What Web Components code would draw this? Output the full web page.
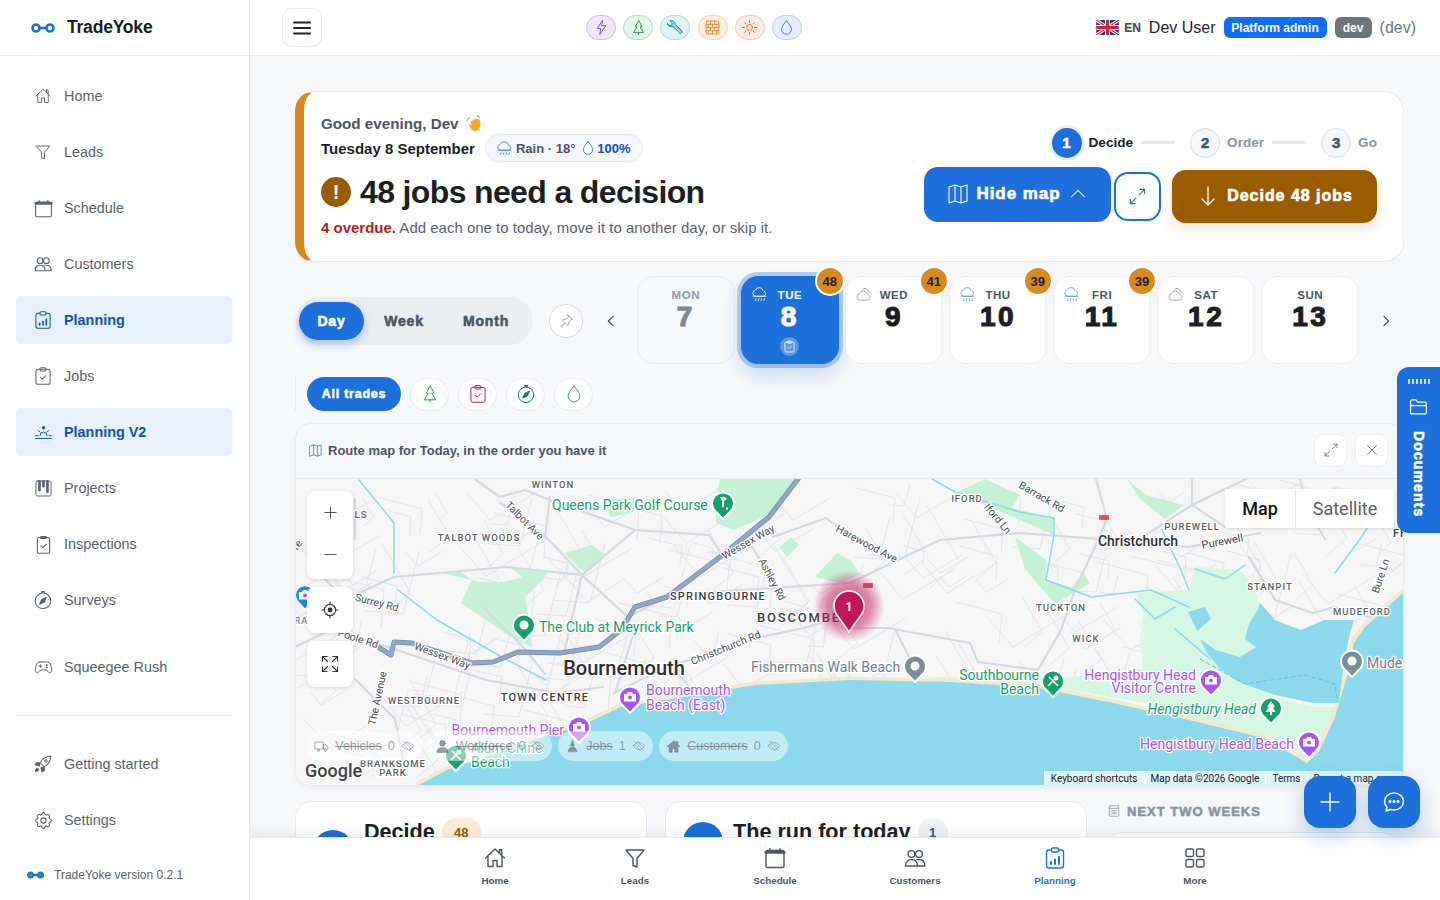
<!DOCTYPE html>
<html lang="en">
<head>
<meta charset="utf-8">
<title>TradeYoke</title>
<style>
  html, body { margin: 0; height: 100%; overflow: hidden; background: #f6f7f9; }
  body { font-family: "Liberation Sans", Arial, sans-serif; color: #1a1f26; --fat-sp: .06em; --fat-st: .04em; }
</style>
</head>
<body>
<ty-app></ty-app>

<script>
// icon paths, all on a 24 box
const ICONS = {
  menu: '<path d="M4 6.5h16M4 12h16M4 17.5h16"/>',
  home: '<path d="M2.5 12 12 3l9.5 9M5 10v10.5h5V14.5h4v6h5V10M16.5 6.8V3.8h2.2v5.2"/>',
  funnel: '<path d="M3 4h18l-7 8.5V21l-4-1.5v-7z"/>',
  calendar: '<rect x="3" y="4.5" width="18" height="17" rx="1.6"/><path d="M3 6.2h18" stroke-width="3"/><path d="M7 2.6v2.4M17 2.6v2.4"/>',
  people: '<circle cx="8.5" cy="8" r="3.4"/><circle cx="16" cy="8" r="3.4"/><path d="M2.5 20c0-4 2.5-6.5 6-6.5s6 2.500 6 6.500zM14 13.700c.6-.2 1.300-.2 2-.2 3.500 0 5.800 2.500 5.800 6.500h-7.300"/>',
  clipdata: '<rect x="3.500" y="4" width="17" height="18" rx="2.500"/><rect x="8.500" y="2" width="7" height="4" rx="1.200" fill="#fff"/><path d="M8 18v-2M12 18v-4.500M16 18v-7" stroke-width="2"/>',
  clipcheck: '<rect x="3.500" y="4" width="17" height="18" rx="2.500"/><rect x="8.500" y="2" width="7" height="4" rx="1.200" fill="none"/><path d="m9 13.500 2.200 2.200 4-4"/>',
  sunrise: '<path d="M7.500 16a4.500 4.500 0 0 1 9 0M5.500 9.500l2 2M18.500 9.500l-2 2M2 16h3M19 16h3M2 19.500h20" /><circle cx="12" cy="6" r="1.600" fill="currentColor"/>',
  kanban: '<rect x="2.500" y="2.500" width="19" height="19" rx="2"/><path d="M7 3v11M12 3v6M17 3v13" stroke-width="3.400"/>',
  inspect: '<rect x="5" y="4" width="14" height="18" rx="1.500"/><path d="M9 2.800h6V5H9z" fill="currentColor"/><path d="m9 13.500 2.200 2.200 4-4"/>',
  compass: '<circle cx="12" cy="13" r="9.300"/><path d="M10.500 2.300h3" stroke-width="2"/><path d="m16 9-2.500 5.500L8 17l2.500-5.500z" fill="currentColor"/>',
  controller: '<path d="M7.500 5h9c2.500 0 4 1.500 4.700 4l1.200 6c.5 2.800-2.500 4.500-4.500 2.500L15.500 15h-7l-2.400 2.500C4.100 19.500 1.100 17.800 1.600 15l1.200-6C3.500 6.500 5 5 7.500 5z"/><path d="M8 8.500v3.500M6.200 10.200h3.600"/><circle cx="16" cy="9" r=".6" fill="currentColor"/><circle cx="16" cy="12" r=".6" fill="currentColor"/>',
  rocket: '<path d="M21.500 2.500c-6 .2-10 3-13 8l5 5c5-3 7.800-7 8-13z" /><circle cx="15.500" cy="8.500" r="1.500" fill="#fff"/><path d="M8.500 10.500H4L2.500 13l5 1.500zM13.500 15.500V20L11 21.500l-1.500-5z" fill="currentColor"/><path d="M5 17c-1.500 1-2 2.500-2 4 1.500 0 3-.5 4-2z" fill="currentColor"/>',
  gear: '<path d="M10.325 4.317c.426-1.756 2.924-1.756 3.350 0a1.724 1.724 0 0 0 2.573 1.066c1.543-.94 3.310.826 2.370 2.370a1.724 1.724 0 0 0 1.065 2.572c1.756.426 1.756 2.924 0 3.350a1.724 1.724 0 0 0-1.066 2.573c.94 1.543-.826 3.310-2.370 2.370a1.724 1.724 0 0 0-2.572 1.065c-.426 1.756-2.924 1.756-3.350 0a1.724 1.724 0 0 0-2.573-1.066c-1.543.94-3.310-.826-2.370-2.370a1.724 1.724 0 0 0-1.065-2.572c-1.756-.426-1.756-2.924 0-3.350a1.724 1.724 0 0 0 1.066-2.573c-.94-1.543.826-3.310 2.370-2.370 1 .608 2.296.07 2.572-1.065z"/><circle cx="12" cy="12" r="3"/>',
  bolt: '<path d="M13.500 2 6 13.500h5L9.500 22 18 9.500h-5.500z"/>',
  tree: '<path d="M12 2.500 7.500 11h2.300L5 19h14l-4.800-8h2.300zM12 19v3"/>',
  wrench: '<path d="M8.500 10.500 18 20a2.200 2.200 0 0 0 3-3l-9.500-9.500a5.500 5.500 0 0 0-7.500-5l3.500 3.500-.8 2.700-2.700.8L.5 6a5.500 5.500 0 0 0 8 4.500z" fill="currentColor" fill-opacity=".25"/>',
  bricks: '<rect x="3" y="3" width="18" height="18" rx="1"/><path d="M3 7.500h18M3 12h18M3 16.500h18M9 3v4.500M15 3v4.500M6 7.500V12M12 7.500V12M18 7.500V12M9 12v4.500M15 12v4.500M6 16.500V21M12 16.500V21M18 16.500V21"/>',
  sun: '<circle cx="12" cy="12" r="4.200"/><path d="M12 2v3M12 19v3M2 12h3M19 12h3M5 5l2 2M17 17l2 2M19 5l-2 2M7 17l-2 2"/>',
  drop: '<path d="M12 2.500c3.500 4.500 7 8 7 12a7 7 0 0 1-14 0c0-4 3.500-7.500 7-12z"/>',
  rain: '<path d="M6.500 14.500a4.200 4.200 0 0 1-.6-8.300 6 6 0 0 1 11.500.6 3.900 3.900 0 0 1-.2 7.700z"/><path d="M3 14.500h18M7 18l-.8 2.500M11 18l-.8 2.500M15 18l-.8 2.500M19 18l-.8 2.500"/>',
  cloud: '<path d="M7 20a4.500 4.500 0 0 1-.6-8.900 6 6 0 0 1 11.500.6 4.200 4.200 0 0 1-.2 8.300z"/><path d="M10 5.500a5 5 0 0 1 9 2.500 3.500 3.500 0 0 1 2.500 3"/>',
  map: '<path d="M3 5 9 3l6 2 6-2v16l-6 2-6-2-6 2zM9 3v16M15 5v16"/>',
  chevup: '<path d="m5 15 7-7 7 7"/>',
  chevleft: '<path d="m15 5-7 7 7 7"/>',
  chevright: '<path d="m9 5 7 7-7 7"/>',
  expand: '<path d="M14 10 21 3M15.500 3H21v5.500M10 14l-7 7M3 15.500V21h5.500"/>',
  down: '<path d="M12 3v18M6 15l6 6 6-6"/>',
  close: '<path d="M4 4l16 16M20 4 4 20"/>',
  pin: '<path d="m14.500 2.500 7 7-2 .5-3.500 3.500.5 4-1.500 1.500-3.800-3.800L5 21l-.5-.5 5.800-6.200L6.500 10.500 8 9l4 .5L15.500 6z"/>',
  plus: '<path d="M12 3v18M3 12h18"/>',
  minus: '<path d="M3 12h18"/>',
  locate: '<circle cx="12" cy="12" r="7.500"/><circle cx="12" cy="12" r="2.500" fill="currentColor"/><path d="M12 1.500v3M12 19.500v3M1.500 12h3M19.500 12h3"/>',
  fullscreen: '<path d="M3 8.500V3h5.500M3 3l6 6M21 8.500V3h-5.500M21 3l-6 6M3 15.500V21h5.500M3 21l6-6M21 15.500V21h-5.500M21 21l-6-6"/>',
  chat: '<path d="M12 3c5.500 0 9.500 3.800 9.500 8.500S17.500 20 12 20c-1.300 0-2.500-.2-3.600-.6L4 21l1-4C3.500 15.500 2.500 13.500 2.500 11.500 2.500 6.800 6.500 3 12 3z"/><circle cx="8" cy="11.500" r=".8" fill="currentColor"/><circle cx="12" cy="11.500" r=".8" fill="currentColor"/><circle cx="16" cy="11.500" r=".8" fill="currentColor"/>',
  grid: '<rect x="3" y="3" width="7.500" height="7.500" rx="1.500"/><rect x="13.500" y="3" width="7.500" height="7.500" rx="1.500"/><rect x="3" y="13.500" width="7.500" height="7.500" rx="1.500"/><rect x="13.500" y="13.500" width="7.500" height="7.500" rx="1.500"/>',
  folder: '<path d="M3 19V6a1.500 1.500 0 0 1 1.500-1.500H9l2 2.500h8.500A1.500 1.500 0 0 1 21 8.500V19a1.500 1.500 0 0 1-1.500 1.500h-15A1.500 1.500 0 0 1 3 19zM3 11h18"/>',
  note: '<rect x="4" y="3" width="16" height="18" rx="1.500"/><path d="M4 7.500h16M8 11h8M8 14h8M8 17h8"/>',
  truck: '<path d="M2 5h13v11H2zM15 9h4l3 3.500V16h-7z"/><circle cx="7" cy="18" r="2"/><circle cx="18" cy="18" r="2"/>',
  eyeoff: '<path d="M2 12s3.500-6 10-6 10 6 10 6-3.500 6-10 6-10-6-10-6zM4 4l16 16M8 3.500l12 12M3.500 9 15 20.500"/>',
  person: '<circle cx="12" cy="7" r="4.500" fill="currentColor"/><path d="M3 21c0-5 4-7 9-7s9 2 9 7z" fill="currentColor"/>',
  worker: '<path d="M12 2l3 9H9zM5 20c0-4 3-7 7-7s7 3 7 7z" fill="currentColor"/>',
  house: '<path d="M12 3 2 12h3v9h5v-6h4v6h5v-9h3l-3-2.800V4h-3v2.400z" fill="currentColor"/>'
};

class TyIcon extends HTMLElement {
  connectedCallback() {
    const size = this.getAttribute('size') || 24;
    const sw = this.getAttribute('sw') || 1.5;
    this.attachShadow({ mode: 'open' }).innerHTML = `
      <style>:host { display: inline-flex; flex: none; line-height: 0; -webkit-text-stroke: 0; } svg { display: block; }</style>
      <svg width="${size}" height="${size}" viewBox="0 0 24 24" fill="none" stroke="currentColor" stroke-width="${sw}" stroke-linecap="round" stroke-linejoin="round">${ICONS[this.getAttribute('name')] || ''}</svg>`;
  }
}
customElements.define('ty-icon', TyIcon);

// the yoke logo, two rings on a bar
class TyLogo extends HTMLElement {
  connectedCallback() {
    const small = this.hasAttribute('small');
    this.attachShadow({ mode: 'open' }).innerHTML = `
      <style>:host { display: inline-flex; flex: none; line-height: 0; }</style>
      ${small
        ? '<svg width="17" height="8" viewBox="0 0 17 8"><rect x="1" y="2.700" width="15" height="2.600" fill="#1d6fdc"/><circle cx="3.500" cy="4" r="2.800" fill="#1fa34a" stroke="#1d6fdc" stroke-width="1.400"/><circle cx="13.500" cy="4" r="2.800" fill="#1fa34a" stroke="#1d6fdc" stroke-width="1.400"/></svg>'
        : '<svg width="24" height="10" viewBox="0 0 24 10"><rect x="6" y="3.700" width="12" height="2.600" fill="#1d6fdc"/><circle cx="5" cy="5" r="3.500" fill="#fff" stroke="#1d6fdc" stroke-width="2.600"/><circle cx="19" cy="5" r="3.500" fill="#fff" stroke="#1d6fdc" stroke-width="2.600"/></svg>'}`;
  }
}
customElements.define('ty-logo', TyLogo);

class TyNavItem extends HTMLElement {
  connectedCallback() {
    const icon = this.getAttribute('icon'), size = +this.getAttribute('size') || 19;
    this.attachShadow({ mode: 'open' }).innerHTML = `
      <style>
        :host { display: flex; align-items: center; height: 48px; border-radius: 6px; font-size: 14.400px; color: #59616d; margin-bottom: 8px; }
        :host([active]) { background: #e8f0fb; color: #0f52ad; font-weight: 700; }
        :host([gapped]) { margin-top: 19px; }
        .ic { width: 52px; padding-left: 6px; box-sizing: border-box; height: 24px; display: flex; align-items: center; justify-content: center; flex: none; margin-left: -2px; margin-right: -2px; }
      </style>
      <span class="ic"><ty-icon name="${icon}" size="${size}" sw="1.250"></ty-icon></span><slot></slot>`;
  }
}
customElements.define('ty-nav-item', TyNavItem);

class TySidebar extends HTMLElement {
  connectedCallback() {
    this.attachShadow({ mode: 'open' }).innerHTML = `
      <style>
        :host { display: flex; flex-direction: column; background: #fff; border-right: 1px solid #e7e9ee; height: 100vh; box-sizing: border-box; }
        .brand { height: 55px; flex: none; display: flex; align-items: center; gap: 12px; padding-left: 31px; border-bottom: 1px solid #e7e9ee;
                 font-size: 17.600px; font-weight: 700; letter-spacing: -.25px; color: #1a1f26; }
        nav { padding: 16px 16px 0; }
        hr { border: 0; border-top: 1px solid #e7e9ee; margin: 24px 0 24px; }
        .ver { display: flex; align-items: center; gap: 10px; padding: 16px 0 0 27px; font-size: 12px; color: #59616d; }
      </style>
      <div class="brand"><ty-logo></ty-logo><span>TradeYoke</span></div>
      <nav>
        <ty-nav-item icon="home" size="18">Home</ty-nav-item>
        <ty-nav-item icon="funnel" size="18">Leads</ty-nav-item>
        <ty-nav-item icon="calendar" size="21">Schedule</ty-nav-item>
        <ty-nav-item icon="people" size="20">Customers</ty-nav-item>
        <ty-nav-item icon="clipdata" size="20" active>Planning</ty-nav-item>
        <ty-nav-item icon="clipcheck" size="20">Jobs</ty-nav-item>
        <ty-nav-item icon="sunrise" size="19" active>Planning V2</ty-nav-item>
        <ty-nav-item icon="kanban" size="19">Projects</ty-nav-item>
        <ty-nav-item icon="inspect" size="21">Inspections</ty-nav-item>
        <ty-nav-item icon="compass" size="20">Surveys</ty-nav-item>
        <ty-nav-item icon="controller" size="19" gapped>Squeegee Rush</ty-nav-item>
        <hr>
        <ty-nav-item icon="rocket" size="20">Getting started</ty-nav-item>
        <ty-nav-item icon="gear" size="21">Settings</ty-nav-item>
      </nav>
      <div class="ver"><ty-logo small></ty-logo><span>TradeYoke version 0.2.1</span></div>`;
  }
}
customElements.define('ty-sidebar', TySidebar);

class TyTradePill extends HTMLElement {
  connectedCallback() {
    const c = this.getAttribute('color'), bg = this.getAttribute('bg'), b = this.getAttribute('border');
    this.attachShadow({ mode: 'open' }).innerHTML = `
      <style>:host { display: flex; align-items: center; justify-content: center; width: 30px; height: 25px; box-sizing: border-box;
        border-radius: 13px; border: 1px solid ${b}; background: ${bg}; color: ${c}; }</style>
      <ty-icon name="${this.getAttribute('icon')}" size="17" sw="1.400"></ty-icon>`;
  }
}
customElements.define('ty-trade-pill', TyTradePill);

class TyTopbar extends HTMLElement {
  connectedCallback() {
    this.attachShadow({ mode: 'open' }).innerHTML = `
      <style>
        :host { display: flex; align-items: center; height: 56px; box-sizing: border-box; flex: none;
                background: #fff; border-bottom: 1px solid #e7e9ee; padding: 0 24px 0 32px; }
        .burger { width: 40px; height: 39px; box-sizing: border-box; border: 1px solid #e7e9ee; border-radius: 10px; display: flex;
                  align-items: center; justify-content: center; color: #1f2530; }
        .pills { display: flex; gap: 7.200px; margin-left: 264px; }
        .user { display: flex; align-items: center; margin-left: auto; font-size: 16px; color: #212529; }
        .en { font-size: 12px; font-weight: 700; -webkit-text-stroke: .2px; color: #444b55; margin: 0 8px 0 5px; }
        .badge { font-size: 12px; font-weight: 700; color: #fff; border-radius: 6px; height: 21px; display: flex; align-items: center; }
        .adm { background: #0d6efd; margin: 0 8px; width: 103px; justify-content: center; }
        .dev { background: #6c757d; width: 37px; justify-content: center; }
        .paren { color: #6c757d; margin-left: 8px; }
      </style>
      <div class="burger"><ty-icon name="menu" size="24" sw="2"></ty-icon></div>
      <div class="pills">
        <ty-trade-pill icon="bolt" color="#7c4ddb" bg="#efe8fd" border="#cdb6f7"></ty-trade-pill>
        <ty-trade-pill icon="tree" color="#2f9e52" bg="#e6f4ea" border="#b2dcbc"></ty-trade-pill>
        <ty-trade-pill icon="wrench" color="#0c86a8" bg="#e1f2f7" border="#aadbe7"></ty-trade-pill>
        <ty-trade-pill icon="bricks" color="#e0903a" bg="#fdf0e1" border="#f6d0a5"></ty-trade-pill>
        <ty-trade-pill icon="sun" color="#ee6a2b" bg="#fdece4" border="#f8c7ae"></ty-trade-pill>
        <ty-trade-pill icon="drop" color="#3b7fe0" bg="#e3edfb" border="#b5cff3"></ty-trade-pill>
      </div>
      <div class="user">
        <svg width="23" height="15" viewBox="0 0 60 40">
          <rect width="60" height="40" fill="#1f3a7d"/>
          <path d="M0 0 60 40M60 0 0 40" stroke="#fff" stroke-width="8"/>
          <path d="M0 0 60 40M60 0 0 40" stroke="#cf1f3a" stroke-width="3"/>
          <path d="M30 0v40M0 20h60" stroke="#fff" stroke-width="13"/>
          <path d="M30 0v40M0 20h60" stroke="#cf1f3a" stroke-width="8"/>
        </svg>
        <span class="en">EN</span><span>Dev User</span>
        <span class="badge adm">Platform admin</span><span class="badge dev">dev</span><span class="paren">(dev)</span>
      </div>`;
  }
}
customElements.define('ty-topbar', TyTopbar);

class TySteps extends HTMLElement {
  connectedCallback() {
    this.attachShadow({ mode: 'open' }).innerHTML = `
      <style>
        :host { display: flex; align-items: center; font-size: 13.600px; font-weight: 700; color: #8a93a0; }
        .n { width: 30px; height: 30px; box-sizing: border-box; border-radius: 50%; border: 1px solid #d6dae1; background: #f6f7f9; color: #4b5563;
             display: flex; align-items: center; justify-content: center; font-size: 15px; -webkit-text-stroke: var(--fat-st); margin-right: 7px; }
        .n.on { background: #1d6fdc; border: 0; color: #fff; box-shadow: 0 0 0 3px #e8f0fb; }
        .cur { color: #1a1f26; }
        .line { width: 34px; height: 3px; border-radius: 2px; background: #e7e9ee; margin: 0 15px 0 8px; }
      </style>
      <span class="n on">1</span><span class="cur">Decide</span><span class="line"></span>
      <span class="n">2</span><span>Order</span><span class="line"></span>
      <span class="n">3</span><span>Go</span>`;
  }
}
customElements.define('ty-steps', TySteps);

class TyHero extends HTMLElement {
  connectedCallback() {
    this.attachShadow({ mode: 'open' }).innerHTML = `
      <style>
        :host { display: flex; justify-content: space-between; align-items: center; height: 171px; box-sizing: border-box; flex: none;
                background: #fff; border: 1px solid #e7e9ee; border-left: 9px solid #d98a1e; border-radius: 20px; padding: 0 26px 0 17px; }
        .left { padding-bottom: 2px; }
        .hi { display: flex; align-items: center; gap: 7px; font-size: 15.200px; font-weight: 700; color: #4b5563; height: 20px; }
        .date { display: flex; align-items: center; gap: 10px; margin-top: 1px; font-size: 15px; font-weight: 700; height: 28px; }
        .chip { display: flex; align-items: center; gap: 5px; height: 28px; box-sizing: border-box; padding: 0 11px 0 10px; background: #f4f6f9;
                border: 1px solid #e7e9ee; border-radius: 14px; font-size: 13px; color: #4b5563; font-weight: 700; }
        .chip b { color: #0f52ad; margin-left: -4px; }
        .chip .ic { color: #3b7fe0; display: flex; }
        h1 { display: flex; align-items: center; gap: 9px; margin: 14px 0 0; font-size: 32px; font-weight: 700; letter-spacing: -.64px; height: 32px; }
        .warn { width: 30px; height: 30px; border-radius: 50%; background: #995c00; color: #fff; font-size: 20px; font-weight: 700; letter-spacing: 0;
                display: flex; align-items: center; justify-content: center; }
        p { margin: 10px 0 0; font-size: 15px; color: #59616d; line-height: 20px; }
        p b { color: #b71c1c; font-weight: 700; }
        .right { display: flex; flex-direction: column; align-items: flex-end; gap: 9px; padding-bottom: 3px; }
        .btns { display: flex; align-items: flex-start; font-size: 16px; font-weight: 700; letter-spacing: var(--fat-sp); -webkit-text-stroke: var(--fat-st); color: #fff; }
        .map { display: flex; align-items: center; gap: 6px; width: 187px; height: 55px; justify-content: center; box-sizing: border-box; background: #1d6fdc; border-radius: 14px; font-size: 17px; }
        .exp { display: flex; align-items: center; justify-content: center; width: 47px; height: 49px; box-sizing: border-box; margin: 5px 11px 0 3px; border: 2px solid #1d6fdc; border-radius: 14px; color: #1d6fdc; }
        .go { display: flex; align-items: center; gap: 7px; width: 205px; height: 53px; margin-top: 3px; justify-content: center; background: #995c00; border-radius: 14px;
              box-shadow: 0 6px 14px rgba(153, 92, 0, .16); }
      </style>
      <div class="left">
        <div class="hi"><span>Good evening, Dev</span>
          <svg width="17" height="17" viewBox="0 0 16 16"><path d="M6 5.500 9 3l1 1 1-.800 1 1 .800-.200c1 3 1.500 6-.500 9s-5.500 2.500-7.300.500L2.500 9.500l1-1 2 1.500-1.500-3z" fill="#f5a623"/><path d="M1 6c0-1.500 1-3 2.500-3.500M10 .8c1.500 0 2.500.800 3 2" stroke="#7fb2ee" fill="none"/></svg>
        </div>
        <div class="date"><span>Tuesday 8 September</span>
          <span class="chip"><span class="ic" style="margin-right:-2px"><ty-icon name="rain" size="17" sw="1.200"></ty-icon></span>Rain · 18° <span class="ic"><ty-icon name="drop" size="16" sw="1.400"></ty-icon></span><b>100%</b></span>
        </div>
        <h1><span class="warn">!</span><span>48 jobs need a decision</span></h1>
        <p><b>4 overdue.</b> Add each one to today, move it to another day, or skip it.</p>
      </div>
      <div class="right">
        <ty-steps></ty-steps>
        <div class="btns">
          <div class="map"><ty-icon name="map" size="24" sw="1.100"></ty-icon><span>Hide map</span><ty-icon name="chevup" size="22" sw="1.100"></ty-icon></div>
          <div class="exp"><ty-icon name="expand" size="19" sw="1.300"></ty-icon></div>
          <div class="go"><ty-icon name="down" size="24" sw="1.300"></ty-icon><span>Decide 48 jobs</span></div>
        </div>
      </div>`;
  }
}
customElements.define('ty-hero', TyHero);

class TyDayCard extends HTMLElement {
  connectedCallback() {
    const wx = this.getAttribute('wx'), badge = this.getAttribute('badge');
    this.attachShadow({ mode: 'open' }).innerHTML = `
      <style>
        :host { display: block; flex: 1; position: relative; height: 88px; box-sizing: border-box; background: #fff; border: 1px solid #e9ebef; border-radius: 17px;
                text-align: center; padding-top: 11px; }
        :host([past]) { background: transparent; }
        :host([past]) .d { color: #939aa5; } :host([past]) .n { color: #7f8791; }
        :host([active]) { background: #1d6fdc; border-color: #1d6fdc; box-shadow: 0 0 0 4px rgba(29, 111, 220, .3), 0 10px 20px rgba(29, 111, 220, .22); }
        :host([active]) .d, :host([active]) .n { color: #fff; }
        :host([active]) .wx { color: #fff; }
        .d { font-size: 11.500px; font-weight: 700; letter-spacing: .5px; color: #4b5563; line-height: 14px; }
        .n { font-size: 28px; font-weight: 700; line-height: 30px; letter-spacing: .09em; -webkit-text-stroke: var(--fat-st); color: #1a1f26; }
        .wx { position: absolute; left: 9px; top: 9px; color: #5b9ae8; }
        :host([wx=cloud]) .wx { color: #9aa1ab; }
        .badge { position: absolute; right: -7px; top: -11px; width: 26px; height: 26px; border-radius: 50%; background: #d98a1e; border: 2px solid #fff;
                 font-size: 13px; font-weight: 700; color: #1a1f26; display: flex; align-items: center; justify-content: center; box-sizing: content-box; margin: 0; }
        .job { width: 19px; height: 19px; border-radius: 50%; background: rgba(255,255,255,.28); color: #fff; margin: 5px auto 0; display: flex; align-items: center; justify-content: center; }
      </style>
      ${wx ? `<span class="wx"><ty-icon name="${wx}" size="17" sw="1.200"></ty-icon></span>` : ''}
      ${badge ? `<span class="badge">${badge}</span>` : ''}
      <div class="d">${this.getAttribute('day')}</div>
      <div class="n">${this.getAttribute('num')}</div>
      ${this.hasAttribute('active') ? '<div class="job"><ty-icon name="clipcheck" size="13" sw="1.500"></ty-icon></div>' : ''}`;
  }
}
customElements.define('ty-day-card', TyDayCard);

class TyDayBar extends HTMLElement {
  connectedCallback() {
    this.attachShadow({ mode: 'open' }).innerHTML = `
      <style>
        :host { display: flex; align-items: center; height: 89px; margin: 14px 4px 0 1px; flex: none; }
        .seg { display: flex; align-items: center; width: 237px; height: 48px; box-sizing: border-box; padding: 0 3px; background: #eceef1; border-radius: 24px; flex: none;
               font-size: 14px; font-weight: 700; letter-spacing: var(--fat-sp); -webkit-text-stroke: var(--fat-st); color: #4b5563; }
        .seg span { height: 38px; display: flex; align-items: center; justify-content: center; }
        .seg .on { width: 65px; background: #1d6fdc; color: #fff; border-radius: 19px; box-shadow: 0 4px 10px rgba(29, 111, 220, .35); }
        .seg .w { width: 80px; } .seg .m { width: 84px; }
        .pin { width: 34px; height: 34px; box-sizing: border-box; margin-left: 16px; border: 1px solid #d6dae1; border-radius: 50%; background: #fff; color: #8a93a0;
               display: flex; align-items: center; justify-content: center; flex: none; }
        .chev { width: 28px; display: flex; justify-content: center; color: #3f4752; flex: none; }
        .days { display: flex; gap: 6.500px; flex: 1; margin-top: -1px; }
      </style>
      <div class="seg"><span class="on">Day</span><span class="w">Week</span><span class="m">Month</span></div>
      <div class="pin"><ty-icon name="pin" size="16" sw="1.200"></ty-icon></div>
      <div class="chev" style="margin:0 12px 0 14px"><ty-icon name="chevleft" size="16" sw="1.700"></ty-icon></div>
      <div class="days">
        <ty-day-card day="MON" num="7" past></ty-day-card>
        <ty-day-card day="TUE" num="8" wx="rain" badge="48" active></ty-day-card>
        <ty-day-card day="WED" num="9" wx="cloud" badge="41"></ty-day-card>
        <ty-day-card day="THU" num="10" wx="rain" badge="39"></ty-day-card>
        <ty-day-card day="FRI" num="11" wx="rain" badge="39"></ty-day-card>
        <ty-day-card day="SAT" num="12" wx="cloud"></ty-day-card>
        <ty-day-card day="SUN" num="13"></ty-day-card>
      </div>
      <div class="chev" style="margin-left:13px"><ty-icon name="chevright" size="16" sw="1.700"></ty-icon></div>`;
  }
}
customElements.define('ty-day-bar', TyDayBar);

class TyTrades extends HTMLElement {
  connectedCallback() {
    const round = (icon, c) => `<span class="r" style="color:${c}"><ty-icon name="${icon}" size="20" sw="1.200"></ty-icon></span>`;
    this.attachShadow({ mode: 'open' }).innerHTML = `
      <style>
        :host { display: flex; align-items: center; gap: 9px; height: 34px; margin: 12px 0 0; padding-left: 11px; border-left: 1px solid #e7e9ee; flex: none; }
        .all { height: 34px; width: 94px; display: flex; align-items: center; justify-content: center; border-radius: 17px; background: #1d6fdc; color: #fff;
               font-size: 12.500px; font-weight: 700; letter-spacing: var(--fat-sp); -webkit-text-stroke: var(--fat-st); }
        .r { width: 39px; height: 33px; box-sizing: border-box; border: 1px solid #e7e9ee; background: #fff; border-radius: 17px; display: flex; align-items: center; justify-content: center; }
      </style>
      <span class="all">All trades</span>
      ${round('tree', '#2f9e52')}${round('clipcheck', '#c2185b')}${round('compass', '#0f7d6b')}${round('drop', '#3b7fe0')}`;
  }
}
customElements.define('ty-trades', TyTrades);

// map canvas, coordinates are pixels inside the 1108x306 map
function buildMap() {
  const poly = (pts, fill, extra = '') => `<path d="M${pts}z" fill="${fill}" ${extra}/>`;
  const line = (pts, c, w, extra = '') => `<path d="M${pts}" fill="none" stroke="${c}" stroke-width="${w}" stroke-linejoin="round" stroke-linecap="round" ${extra}/>`;

  // seeded filler streets so the land has its usual texture
  let seed = 41;
  const rnd = () => (seed = (seed * 1664525 + 1013904223) % 4294967296) / 4294967296;
  let streets = '';
  for (let i = 0; i < 300; i++) {
    const x = rnd() * 1108, y = rnd() * 270, a = Math.floor(rnd() * 4) * Math.PI / 4 + .25, l = 20 + rnd() * 50;
    const x2 = x + Math.cos(a) * l, y2 = y + Math.sin(a) * l;
    const x3 = x2 + Math.cos(a + 1.4) * l * .6, y3 = y2 + Math.sin(a + 1.4) * l * .6;
    streets += line(`${x | 0} ${y | 0}L${x2 | 0} ${y2 | 0}L${x3 | 0} ${y3 | 0}`, '#e2e5eb', 1);
  }

  const parks = [
    '147 94L166 93 177 101 166 124 191 141 216 158 237 168 234 141 230 118 248 101 253 93 216 89 227 98 209 103 184 103',
    '269 74L297 66 311 76 290 94',
    '425 0L421 21 421 44 439 51 478 34 503 0',
    '311 21L340 18 336 34 315 38',
    '485 68L496 58 504 66 492 78',
    '520 98L542 74 555 81 565 95 545 104',
    '690 0L725 16 717 29 759 39 759 56 700 30 660 14',
    '832 0L851 16 889 26 870 40 845 20',
    '720 58L751 81 751 101 777 108 788 94 795 104 760 125 730 90',
    '1020 20L1040 8 1062 12 1040 28',
    '930 150L945 130 952 145'
  ].map(p => poly(p, '#c6f1d6')).join('');

  const marsh = poly('845 158L848 134 841 114 894 111 901 88 946 91 961 114 965 131 954 154 961 168 943 181 960 200 980 218 1018 228 1040 228 1029 258 1010 278 969 258 894 238 852 224 780 212 640 206 600 204 640 198 760 200 848 190', '#d6f7e4');

  const roads = [
    '205 24L251 58 287 96 311 118 333 138', '181 1L205 18 230 11 255 21 340 51 414 56 425 73', '255 18L250 58',
    '287 96L269 174', '64 114L99 98 212 88 287 96 340 51', '478 58L531 39 555 58', '457 68L485 114',
    '319 214L372 188 467 158 513 148 555 134', '555 149L593 149 675 164 683 183 743 191 766 151 781 108 800 68 812 40 801 0',
    '555 104L645 61 724 54 818 61 893 68 965 54', '0 168L35 151 81 164 191 201 262 214 308 208', '954 78L980 121 1018 134 1040 128 1108 148',
    '1005 0L1012 30 1030 60', '951 0L897 26 851 56', '897 0L897 26 930 48', '333 138L372 118 430 112 555 104',
    '50 120L30 100 20 60', '320 214L340 150', '60 60L60 20', '190 130L230 170 250 195', '60 200L100 240 110 290', '380 190L400 215', '600 150L620 190'
  ].map(p => line(p, '#d5dae2', 2.200)).join('');

  const rivers = [
    '64 1L99 44 99 94', '103 111L142 141 212 181 251 201', '637 0L660 13 725 33 759 39 759 56 751 101 796 118 856 111 894 128',
    '867 51L886 91 894 111', '1040 94L1065 60 1092 20', '900 90L930 100 950 86', '840 120L860 140 880 128', '880 150L915 180'
  ].map(p => line(p, '#8cd9ee', 1.500)).join('');

  const wessex = '83 168L96 176 99 163 117 164 177 184 198 183 223 173 265 174 304 168 326 151 340 128 372 118 425 78 474 38 503 0';

  // text helper with the white halo google labels have
  const t = (x, y, s, o = {}) => {
    const a = o.rot ? ` transform="rotate(${o.rot} ${x} ${y})"` : '';
    return `<text x="${x}" y="${y}" font-size="${o.size || 10}" fill="${o.fill || '#5b6068'}" text-anchor="${o.anchor || 'middle'}" ` +
      `font-weight="${o.weight || 400}" letter-spacing="${o.sp || 0}" font-style="${o.style || 'normal'}"${a}>${s}</text>`;
  };
  const area = (x, y, s, size = 9.500) => t(x, y, s, { size, sp: 1, fill: '#5a5f67', weight: 500 });
  const road = (x, y, s, rot) => t(x, y, s, { size: 10.500, rot, fill: '#4a4f57' });

  // place pin, x and y are the centre of its head in page pixels
  const glyphs = {
    dot: '<circle r="4.500" fill="#fff"/>',
    cam: '<path d="M-6 -3h3l1-2h4l1 2h3v7.500h-12z" fill="#fff"/><circle cy="0.500" r="2" fill="#a855f7"/>',
    tree: '<path d="M0-7-4-1h2l-3.500 5H-1v3h2V4h3.500L2-1h2z" fill="#fff"/>',
    golf: '<path d="M-3-6h5l2 2-3 2v6h-2V-2zM3 4.500h2v2H3z" fill="#fff"/>',
    ball: '<path d="M-5 5 4-4M-4-4 5 5" stroke="#fff" stroke-width="1.600"/><circle cx="3" cy="-3" r="2.500" fill="#fff"/>'
  };
  const pin = (px, py, color, glyph = 'dot', r = 11) => {
    const g = `<g transform="translate(${px - 295} ${py - 479})">
      <path d="M0 ${r + 5} L${-r + 2} ${r * .62} A${r} ${r} 0 1 1 ${r - 2} ${r * .62} Z" fill="#000" opacity=".18" transform="translate(0 1)"/>
      <path d="M0 ${r + 5} L${-r + 2} ${r * .62} A${r} ${r} 0 1 1 ${r - 2} ${r * .62} Z" fill="${color}" stroke="#fff" stroke-width="2"/>
      ${glyphs[glyph]}</g>`;
    return g;
  };
  const GREEN = '#15a06d', PURPLE = '#a855f7', SLATE = '#7a8c9c';
  const poi = (x, y, s, fill, anchor = 'start', o = {}) => t(x - 295, y - 479, s, Object.assign({ size: 14, fill, anchor }, o));

  return `<svg width="1108" height="306" viewBox="0 0 1108 306" xmlns="http://www.w3.org/2000/svg">
    <defs><radialGradient id="glow"><stop offset="0" stop-color="#c2185b" stop-opacity=".75"/><stop offset=".6" stop-color="#c2185b" stop-opacity=".5"/><stop offset="1" stop-color="#c2185b" stop-opacity="0"/></radialGradient></defs>
    <rect width="1108" height="306" fill="#f6f6f7"/>
    ${streets}${parks}${marsh}${roads}${rivers}
    ${line('124 306L152 291 248 258 294 243 326 228 389 218 460 206 555 201 657 203 743 209 818 224 894 241 969 259 1012 284', '#f5e9cb', 7)}
    ${line('1012 284L1025 271 1040 238 1052 198 1059 164 1070 148', '#f5e9cb', 8)}
    ${line('1070 148L1108 112', '#f5e9cb', 5)}
    ${poly('124 306L152 291 248 258 294 243 326 228 389 218 460 206 555 201 657 203 743 209 818 224 894 241 969 259 1012 284 1025 271 1040 238 1052 198 1059 164 1070 148 1108 114 1108 306', '#8cd9ee')}
    ${poly('965 124L980 141 1006 151 1029 141 1059 141 1055 154 1048 191 1044 224 1018 224 980 216 946 204 925 190 912 174 905 160 921 171 945 178 961 168 950 160 954 145 962 132', '#8cd9ee')}
    ${poly('893 133L910 128 916 140 902 152', '#8cd9ee')}
    ${line('905 180L950 205 1010 196 1040 205 1042 220', '#5fc3de', 1, 'stroke-dasharray="4 3"')}
    ${line(wessex, '#6f87ad', 5)}${line(wessex, '#93a8c9', 3.600)}
    <g font-family="Roboto, 'Liberation Sans', sans-serif" paint-order="stroke" stroke="#fff" stroke-width="2.600" stroke-linejoin="round">
      ${area(258, 9, 'WINTON')}${area(184, 62, 'TALBOT WOODS')}${area(63, 39, 'LLS')}${area(129, 225, 'WESTBOURNE')}
      ${t(250, 222, 'TOWN CENTRE', { size: 11, sp: 1.200, weight: 500, fill: '#3b3f46' })}
      ${area(98, 288, 'BRANKSOME')}${area(98, 297, 'PARK')}
      ${t(423, 121, 'SPRINGBOURNE', { size: 11, sp: 1.200, weight: 500, fill: '#3b3f46' })}
      ${t(504, 143, 'BOSCOMBE', { size: 13, sp: 1.800, weight: 500, fill: '#3b3f46' })}
      ${area(672, 23, 'IFORD')}${area(897, 51, 'PUREWELL')}${area(975, 111, 'STANPIT')}${area(766, 132, 'TUCKTON')}${area(791, 163, 'WICK')}${area(1067, 136, 'MUDEFORD')}
      ${t(329, 196, 'Bournemouth', { size: 20, weight: 500, fill: '#2b2e33' })}
      ${t(843, 67, 'Christchurch', { size: 14, weight: 500, fill: '#2b2e33' })}
      ${t(928, 66, 'Purewell', { size: 11, rot: -10, fill: '#3b3f46' })}
      ${road(227, 44, 'Talbot Ave', 45)}${road(455, 66, 'Wessex Way', -30)}${road(474, 102, 'Ashley Rd', 62)}${road(570, 68, 'Harewood Ave', 28)}
      ${road(745, 21, 'Barrack Rd', 30)}${road(700, 42, 'Iford Ln', 50)}${road(432, 172, 'Christchurch Rd', -22)}${road(146, 180, 'Wessex Way', 20)}
      ${road(62, 163, 'Poole Rd', 18)}${road(81, 127, 'Surrey Rd', 14)}${road(86, 220, 'The Avenue', -78)}${road(1089, 98, 'Bure Ln', -72)}
      ${road(5, 68, 're', -55)}${t(3, 145, 'BRA', { size: 9, sp: 1 })}${t(1105, 58, 'FF', { size: 11, sp: 1, weight: 500, fill: '#3b3f46' })}
      ${poi(552, 510, 'Queens Park Golf Course', GREEN)}${poi(539, 632, 'The Club at Meyrick Park', GREEN)}
      ${poi(751, 672, 'Fishermans Walk Beach', '#6f8090')}${poi(1039, 680, 'Southbourne', GREEN, 'end')}${poi(1039, 694, 'Beach', GREEN, 'end')}
      ${poi(1196, 680, 'Hengistbury Head', PURPLE, 'end')}${poi(1196, 693, 'Visitor Centre', PURPLE, 'end')}
      ${poi(1256, 714, 'Hengistbury Head', GREEN, 'end', { style: 'italic' })}${poi(1294, 749, 'Hengistbury Head Beach', PURPLE, 'end')}
      ${poi(1367, 668, 'Mude', '#6f8090')}${poi(646, 695, 'Bournemouth', PURPLE)}${poi(646, 710, 'Beach (East)', PURPLE)}
      ${poi(564, 735, 'Bournemouth Pier', PURPLE, 'end')}${poi(471, 753, 'Alum Chine', GREEN)}${poi(471, 767, 'Beach', GREEN)}
    </g>
    ${pin(723, 503, GREEN, 'golf')}${pin(524, 625, GREEN)}${pin(915, 666, SLATE)}${pin(1053, 681, GREEN, 'ball')}
    ${pin(1211, 680, PURPLE, 'cam')}${pin(1271, 708, GREEN, 'tree')}${pin(1309, 742, PURPLE, 'cam')}${pin(1352, 661, SLATE)}
    ${pin(630, 697, PURPLE, 'cam')}${pin(579, 727, PURPLE, 'cam')}${pin(456, 755, GREEN, 'ball')}${pin(305, 595, '#1a8cf0', 'cam', 10)}
    <rect x="804" y="36" width="10" height="5" fill="#e8554e" rx="1"/><rect x="568" y="104" width="10" height="5" fill="#e8554e" rx="1"/>
    <circle cx="554" cy="127" r="36" fill="url(#glow)"/>
    <g transform="translate(554 127)">
      <path d="M0 26-12 9A15 15 0 1 1 12 9Z" fill="#c2185b" stroke="#fff" stroke-width="1.500"/>
      <text y="5" font-size="12" font-weight="700" fill="#fff" text-anchor="middle" font-family="Roboto, sans-serif">1</text>
    </g>
    <text x="10" y="298" font-family="Roboto, 'Liberation Sans', sans-serif" font-size="18" font-weight="500" fill="#3c4043" paint-order="stroke" stroke="#fff" stroke-width="2.500">Google</text>
  </svg>`;
}

class TyRouteMap extends HTMLElement {
  connectedCallback() {
    const pill = (icon, name, n, w) => `<span class="pill" style="width:${w}px"><ty-icon name="${icon}" size="15" sw="1.200"></ty-icon><s>${name}</s><span>${n}</span><ty-icon name="eyeoff" size="14" sw="1"></ty-icon></span>`;
    this.attachShadow({ mode: 'open' }).innerHTML = `
      <style>
        :host { display: block; position: relative; margin: 12px 0 0; border: 1px solid #e7e9ee; border-radius: 16px; overflow: hidden; flex: none; box-shadow: 0 2px 6px rgba(20, 30, 50, .06); }
        header { display: flex; align-items: center; box-sizing: content-box; height: 52px; padding: 0 15px 2px 12px; font-size: 13px; font-weight: 700; color: #4b5563; border-bottom: 1px solid #e7e9ee; gap: 5px; }
        header .ic { color: #3b7fe0; display: flex; }
        header .sp { flex: 1; }
        .tool { width: 33px; height: 33px; display: flex; align-items: center; justify-content: center; background: #fff; border: 1px solid #eceef1; border-radius: 9px; color: #5a626e; margin-left: 3px; box-sizing: border-box; }
        .canvas { position: relative; height: 306px; overflow: hidden; margin-left: -1px; font-family: Roboto, "Liberation Sans", sans-serif; }
        svg { display: block; }
        .ctrl { position: absolute; left: 12px; width: 46px; background: #fff; border-radius: 8px; box-shadow: 0 1px 4px rgba(0,0,0,.12); color: #333; box-sizing: border-box;
                display: flex; flex-direction: column; align-items: center; justify-content: center; }
        .type { position: absolute; left: 930px; top: 10px; height: 39px; display: flex; background: #fff; box-shadow: 0 1px 3px rgba(0,0,0,.12); font-size: 18px; align-items: center; border-radius: 2px; }
        .type span { display: flex; align-items: center; justify-content: center; height: 100%; }
        .type .a { width: 70px; font-weight: 500; color: #111; border-right: 1px solid #e7e9ee; }
        .type .b { width: 98px; color: #5a5f67; }
        .legend { position: absolute; left: 12px; top: 252px; display: flex; gap: 6px; }
        .pill { height: 30px; box-sizing: border-box; border-radius: 15px; background: rgba(255,255,255,.48); color: rgba(90,100,112,.62); display: flex; align-items: center; justify-content: center; gap: 6px;
                font: 400 12.500px "Liberation Sans", sans-serif; }
        .attr { position: absolute; right: 0; bottom: 0; height: 14px; display: flex; font-size: 10px; color: #222; background: rgba(255,255,255,.72); align-items: center; }
        .attr span { padding: 0 6px; border-left: 1px solid rgba(255,255,255,.9); white-space: nowrap; }
      </style>
      <header>
        <span class="ic"><ty-icon name="map" size="15" sw="1.300"></ty-icon></span><span>Route map for Today, in the order you have it</span><span class="sp"></span>
        <span class="tool"><ty-icon name="expand" size="16" sw="1.200"></ty-icon></span>
        <span class="tool"><ty-icon name="close" size="14" sw="1.200"></ty-icon></span>
      </header>
      <div class="canvas">
        ${buildMap()}
        <div class="ctrl" style="top:12px;height:88px;gap:27px;padding-bottom:4px"><ty-icon name="plus" size="15" sw="1.300"></ty-icon><ty-icon name="minus" size="15" sw="1.300"></ty-icon></div>
        <div class="ctrl" style="top:108px;height:46px"><ty-icon name="locate" size="18" sw="1.500"></ty-icon></div>
        <div class="ctrl" style="top:162px;height:46px"><ty-icon name="fullscreen" size="20" sw="1.300"></ty-icon></div>
        <div class="type"><span class="a">Map</span><span class="b">Satellite</span></div>
        <div class="legend">${pill('truck', 'Vehicles', 0, 115)}${pill('person', 'Workforce', 0, 124)}${pill('worker', 'Jobs', 1, 95)}${pill('house', 'Customers', 0, 129)}</div>
        <div class="attr"><span>Keyboard shortcuts</span><span>Map data ©2026 Google</span><span>Terms</span><span>Report a map error</span></div>
      </div>`;
  }
}
customElements.define('ty-route-map', TyRouteMap);

class TyLowerCards extends HTMLElement {
  connectedCallback() {
    this.attachShadow({ mode: 'open' }).innerHTML = `
      <style>
        :host { display: grid; grid-template-columns: 352px 422px 1fr; column-gap: 18px; margin-top: 15px; flex: none; height: 120px; }
        .card { background: #fff; border: 1px solid #e7e9ee; border-radius: 16px; display: flex; gap: 12px; padding-left: 17px; }
        .dot { width: 40px; height: 40px; border-radius: 50%; background: #1d6fdc; flex: none; }
        h2 { margin: 17px 0 0; font-size: 21.600px; font-weight: 700; line-height: 26px; white-space: nowrap; }
        .num { height: 28px; min-width: 30px; box-sizing: border-box; margin-top: 16px; border-radius: 14px; display: flex; align-items: center; justify-content: center; font-size: 13px; font-weight: 700; }
        .side { padding-left: 2px; }
        .head { display: flex; align-items: center; gap: 6px; height: 20px; color: #8a93a0; font-size: 13px; font-weight: 700; letter-spacing: 1px; -webkit-text-stroke: var(--fat-st); }
        .box { height: 80px; margin: 11px 7px 0 0; background: #fff; border: 1px solid #e7e9ee; border-radius: 14px; }
      </style>
      <div class="card"><span class="dot" style="margin-top:28px"></span><h2 style="margin-left:-1px">Decide</h2><span class="num" style="background:#fdf0d9;color:#995c00;margin-left:-5px;width:39px">48</span></div>
      <div class="card"><span class="dot" style="margin-top:20px"></span><h2 style="margin-left:-2px">The run for today</h2><span class="num" style="background:#f0f2f5;color:#4b5563;margin-left:-5px">1</span></div>
      <div class="side"><div class="head"><ty-icon name="note" size="14" sw="1.300"></ty-icon><span>NEXT TWO WEEKS</span></div><div class="box"></div></div>`;
  }
}
customElements.define('ty-lower-cards', TyLowerCards);

class TyBottomNav extends HTMLElement {
  connectedCallback() {
    const item = (icon, label, on) => `<div class="i${on ? ' on' : ''}"><ty-icon name="${icon}" size="24" sw="1.400"></ty-icon><span>${label}</span></div>`;
    this.attachShadow({ mode: 'open' }).innerHTML = `
      <style>
        :host { position: absolute; left: 0; right: 0; bottom: 0; height: 63px; background: #fff; border-top: 1px solid #e7e9ee; box-sizing: border-box; display: flex; justify-content: center;
                box-shadow: 0 -6px 12px rgba(20, 30, 50, .06); }
        .i { width: 140px; display: flex; flex-direction: column; align-items: center; padding-top: 8px; gap: 5px; color: #4b5563; }
        .i span { font-size: 9.800px; font-weight: 700; line-height: 12px; }
        .on { color: #1d6fdc; }
      </style>
      ${item('home', 'Home')}${item('funnel', 'Leads')}${item('calendar', 'Schedule')}${item('people', 'Customers')}${item('clipdata', 'Planning', true)}${item('grid', 'More')}`;
  }
}
customElements.define('ty-bottom-nav', TyBottomNav);

class TyFab extends HTMLElement {
  connectedCallback() {
    this.attachShadow({ mode: 'open' }).innerHTML = `
      <style>:host { display: flex; align-items: center; justify-content: center; width: 52px; height: 52px; border-radius: 16px; background: #1d6fdc; color: #fff;
        box-shadow: 0 8px 20px rgba(29, 111, 220, .3); }</style>
      <ty-icon name="${this.getAttribute('icon')}" size="${this.getAttribute('size') || 24}" sw="1.400"></ty-icon>`;
  }
}
customElements.define('ty-fab', TyFab);

class TyDocsTab extends HTMLElement {
  connectedCallback() {
    this.attachShadow({ mode: 'open' }).innerHTML = `
      <style>
        :host { position: absolute; right: 0; top: 367px; width: 43px; height: 166px; background: #1d6fdc; border-radius: 12px 0 0 12px; color: #fff; display: flex; flex-direction: column; align-items: center; box-sizing: border-box; padding-top: 12px; z-index: 3; }
        .grip { display: flex; gap: 2px; height: 5px; } .grip i { width: 2px; background: #cfe1f9; }
        .t { writing-mode: vertical-rl; font-size: 14px; font-weight: 700; letter-spacing: .08em; -webkit-text-stroke: var(--fat-st); margin-top: 14px; }
        ty-icon { margin-top: 12px; }
      </style>
      <div class="grip"><i></i><i></i><i></i><i></i><i></i><i></i></div>
      <ty-icon name="folder" size="21" sw="1.300"></ty-icon>
      <div class="t">Documents</div>`;
  }
}
customElements.define('ty-docs-tab', TyDocsTab);

class TyApp extends HTMLElement {
  connectedCallback() {
    this.attachShadow({ mode: 'open' }).innerHTML = `
      <style>
        :host { display: grid; grid-template-columns: 250px 1fr; height: 100vh; overflow: hidden; position: relative; }
        main { display: flex; flex-direction: column; position: relative; height: 100vh; overflow: hidden; min-width: 0; }
        .scroll { flex: 1; display: flex; flex-direction: column; padding: 35px 36px 0 45px; overflow: hidden; background: #f6f7f9; }
        .fabs { position: absolute; right: 20px; bottom: 72px; display: flex; gap: 12px; z-index: 2; }
      </style>
      <ty-sidebar></ty-sidebar>
      <main>
        <ty-topbar></ty-topbar>
        <div class="scroll">
          <ty-hero></ty-hero>
          <ty-day-bar></ty-day-bar>
          <ty-trades></ty-trades>
          <ty-route-map></ty-route-map>
          <ty-lower-cards></ty-lower-cards>
        </div>
        <ty-bottom-nav></ty-bottom-nav>
        <div class="fabs"><ty-fab icon="plus"></ty-fab><ty-fab icon="chat"></ty-fab></div>
      </main>
      <ty-docs-tab></ty-docs-tab>`;
  }
}
customElements.define('ty-app', TyApp);
</script>
</body>
</html>
